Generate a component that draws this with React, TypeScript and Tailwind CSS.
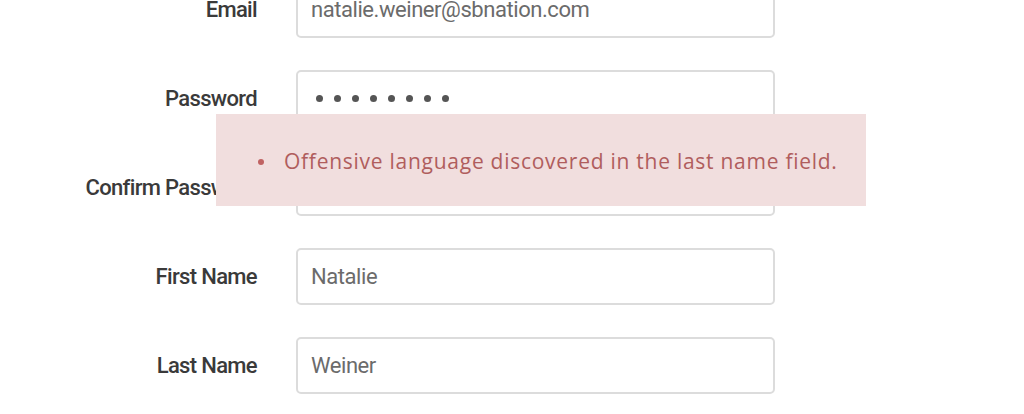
const rows = [
  { label: "Email", value: "natalie.weiner@sbnation.com" },
  { label: "Password", value: "", password: true },
  { label: "Confirm Password", value: "" },
  { label: "First Name", value: "Natalie" },
  { label: "Last Name", value: "Weiner" },
];

export default function App() {
  return (
    <div className="relative h-[414px] w-[1024px] overflow-hidden bg-white font-['Roboto',sans-serif]">
      <div className="-mt-[19px] flex flex-col gap-[32px]">
        {rows.map((row) => (
          <div key={row.label} className="flex items-center">
            <label className="w-[257px] shrink-0 text-right text-[22px] font-medium tracking-[-0.03em] text-[#3a3a3a] whitespace-nowrap">
              {row.label}
            </label>
            <div className="ml-[39px] flex h-[57px] w-[479px] items-center rounded-[5px] border-2 border-[#dcdcdc] bg-white px-[13px] text-[22px] text-[#6b6b6b] tracking-[-0.02em]">
              {row.password ? (
                <div className="flex gap-[11px] pl-[5px]">
                  {Array.from({ length: 8 }).map((_, i) => (
                    <span key={i} className="h-[7px] w-[7px] rounded-full bg-[#555]" />
                  ))}
                </div>
              ) : (
                row.value
              )}
            </div>
          </div>
        ))}
      </div>

      {/* error flash over the form */}
      <div className="absolute left-[216px] top-[114px] flex h-[92px] w-[650px] items-center bg-[#f1dede] pt-[4px] pl-[42px] font-['Open_Sans',sans-serif] text-[21px] tracking-[0.035em] text-[#b05d5d]">
        <span className="mr-[20px] h-[6px] w-[6px] shrink-0 rounded-full bg-[#c06262]" />
        <span>Offensive language discovered in the last name field.</span>
      </div>
    </div>
  );
}
